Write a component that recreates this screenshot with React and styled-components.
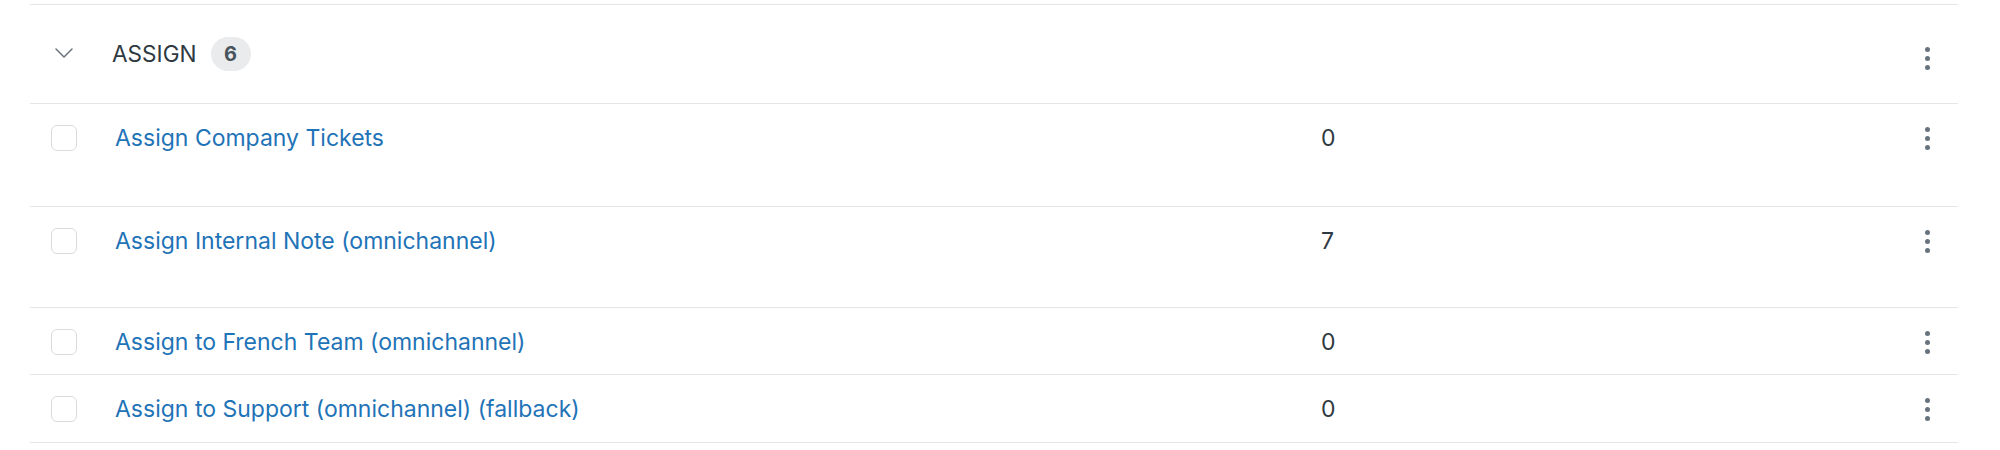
import React from 'react';
import styled, { createGlobalStyle } from 'styled-components';

const GlobalStyle = createGlobalStyle`
  html, body {
    margin: 0;
    padding: 0;
    background: #fff;
  }
  body {
    font-family: Inter, "Noto Sans", "Liberation Sans", sans-serif;
    color: #2f3941;
  }
`;

const Page = styled.div`
  padding: 4px 42px 0 30px;
`;

const Table = styled.div`
  border-top: 1px solid #e4e7e9;
`;

const GroupHeader = styled.div`
  display: flex;
  align-items: center;
  height: 98px;
  padding: 0 0 0 25px;
  border-bottom: 1px solid #e4e7e9;
`;

const Chevron = styled.svg`
  width: 18px;
  height: 10px;
  flex: none;
  margin-right: 39px;
  margin-bottom: 2px;
`;

const GroupTitle = styled.span`
  font-size: 22.6px;
  line-height: 28px;
  text-transform: uppercase;
  color: #2f3941;
`;

const Badge = styled.span`
  display: inline-flex;
  align-items: center;
  justify-content: center;
  min-width: 40px;
  height: 34px;
  margin-left: 14px;
  padding: 0 8px;
  box-sizing: border-box;
  border-radius: 17px;
  background: #e9ebed;
  color: #49545c;
  font-size: 20px;
  font-weight: 700;
`;

const Spacer = styled.div`
  flex: 1;
`;

const Row = styled.div`
  display: grid;
  grid-template-columns: 85px 1fr 575px 62px;
  align-items: start;
  height: ${({ $h }) => $h}px;
  border-bottom: 1px solid #e4e7e9;
`;

const Cell = styled.div`
  display: flex;
  align-items: center;
  height: 28px;
  margin-top: 20px;
`;

const CheckCell = styled(Cell)`
  padding-left: 21px;
`;

const Checkbox = styled.span`
  display: block;
  width: 26px;
  height: 26px;
  box-sizing: border-box;
  border: 1.5px solid #d8dcde;
  border-radius: 6px;
  background: #fff;
`;

const NameLink = styled.a`
  font-size: 23px;
  line-height: 28px;
  color: #1f73b7;
  text-decoration: none;
`;

const Count = styled.span`
  font-size: 23px;
  line-height: 28px;
  color: #2f3941;
`;

const ActionCell = styled(Cell)`
  justify-content: center;
`;

const DotsButton = styled.button`
  display: flex;
  flex-direction: column;
  align-items: center;
  gap: 4px;
  padding: 0;
  border: 0;
  background: none;
  cursor: pointer;
`;

const Dot = styled.span`
  width: 5px;
  height: 5px;
  border-radius: 50%;
  background: #68737d;
`;

const HeaderActions = styled.div`
  width: 62px;
  display: flex;
  justify-content: center;
  margin-top: 8px;
`;

const Dots = () => (
  <DotsButton aria-label="More options">
    <Dot />
    <Dot />
    <Dot />
  </DotsButton>
);

const rows = [
  { name: 'Assign Company Tickets', count: 0, h: 102 },
  { name: 'Assign Internal Note (omnichannel)', count: 7, h: 100 },
  { name: 'Assign to French Team (omnichannel)', count: 0, h: 66 },
  { name: 'Assign to Support (omnichannel) (fallback)', count: 0, h: 67 },
];

export default function App() {
  return (
    <Page>
      <GlobalStyle />
      <Table>
        <GroupHeader>
          <Chevron viewBox="0 0 18 10" fill="none">
            <path d="M1 1l8 8 8-8" stroke="#68737d" strokeWidth="1.5" strokeLinecap="round" strokeLinejoin="round" />
          </Chevron>
          <GroupTitle>Assign</GroupTitle>
          <Badge>6</Badge>
          <Spacer />
          <HeaderActions>
            <Dots />
          </HeaderActions>
        </GroupHeader>
        {rows.map((r) => (
          <Row key={r.name} $h={r.h}>
            <CheckCell>
              <Checkbox />
            </CheckCell>
            <Cell>
              <NameLink href="#">{r.name}</NameLink>
            </Cell>
            <Cell>
              <Count>{r.count}</Count>
            </Cell>
            <ActionCell>
              <Dots />
            </ActionCell>
          </Row>
        ))}
      </Table>
    </Page>
  );
}
